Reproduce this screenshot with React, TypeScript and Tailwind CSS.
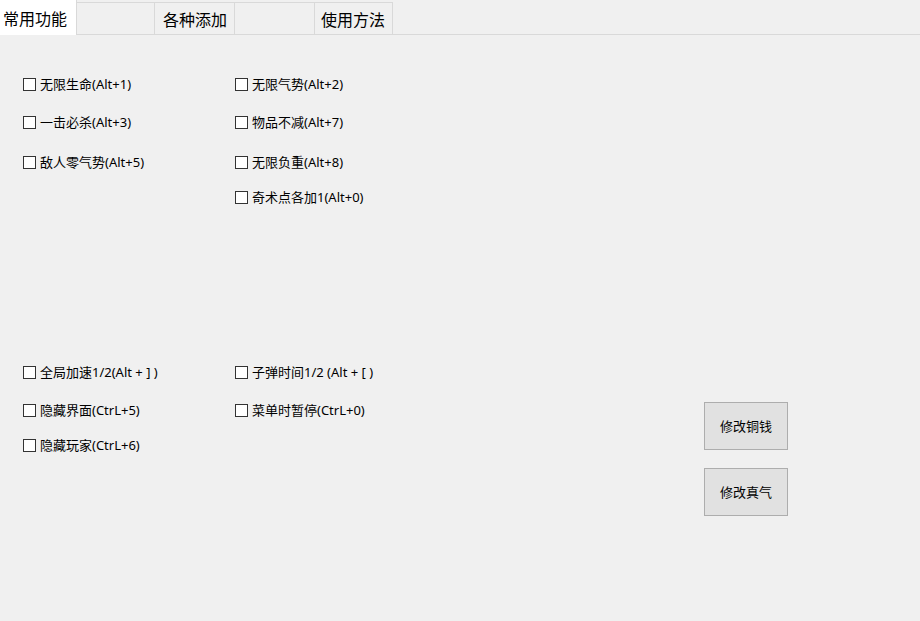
import React from "react";

const font = "font-['Microsoft_YaHei','Noto_Sans_CJK_SC',sans-serif]";
const labelFont = "font-['Segoe_UI','Noto_Sans','Noto_Sans_CJK_SC',sans-serif]";

const tabs = ["常用功能", "", "各种添加", "", "使用方法"];
const tabWidths = ["w-[77px]", "w-[78px]", "w-[80px]", "w-[80px]", "w-[78px]"];

const CheckItem: React.FC<{ label: string; className?: string }> = ({ label, className }) => (
  <label className={`flex h-[20px] items-center gap-[4px] text-[13px] text-black ${labelFont} ${className ?? ""}`}>
    <span className="h-[13px] w-[13px] shrink-0 border border-[#333333] bg-white" />
    <span className="whitespace-pre leading-none">{label}</span>
  </label>
);

const App: React.FC = () => {
  return (
    <div className={`h-[621px] w-[920px] overflow-hidden bg-[#f0f0f0] ${font}`}>
      {/* tab strip */}
      <div className="flex h-[35px] items-end border-b border-[#d9d9d9]">
        {tabs.map((tab, i) =>
          i === 0 ? (
            <div
              key={i}
              className={`${tabWidths[i]} flex h-[35px] -mb-px items-center border-r border-[#d9d9d9] bg-white pl-[3px] text-[16px] text-black`}
            >
              {tab}
            </div>
          ) : (
            <div
              key={i}
              className={`${tabWidths[i]} flex h-[32px] items-center justify-end border-r border-t border-[#d9d9d9] pr-[7px] text-[16px] text-black`}
            >
              {tab}
            </div>
          )
        )}
      </div>

      <div className="flex pl-[23px]">
        <div className="flex w-[212px] flex-col">
          <CheckItem label="无限生命(Alt+1)" className="mt-[39px]" />
          <CheckItem label="一击必杀(Alt+3)" className="mt-[18px]" />
          <CheckItem label="敌人零气势(Alt+5)" className="mt-[20px]" />
          <CheckItem label="全局加速1/2(Alt + ] )" className="mt-[190px]" />
          <CheckItem label="隐藏界面(CtrL+5)" className="mt-[18px]" />
          <CheckItem label="隐藏玩家(CtrL+6)" className="mt-[15px]" />
        </div>
        <div className="flex w-[469px] flex-col">
          <CheckItem label="无限气势(Alt+2)" className="mt-[39px]" />
          <CheckItem label="物品不减(Alt+7)" className="mt-[18px]" />
          <CheckItem label="无限负重(Alt+8)" className="mt-[20px]" />
          <CheckItem label="奇术点各加1(Alt+0)" className="mt-[15px]" />
          <CheckItem label="子弹时间1/2 (Alt + [ )" className="mt-[155px]" />
          <CheckItem label="菜单时暂停(CtrL+0)" className="mt-[18px]" />
        </div>
        <div className="flex flex-col">
          <button
            type="button"
            className="mt-[367px] h-[48px] w-[84px] border border-[#adadad] bg-[#e1e1e1] text-[13px] text-black"
          >
            修改铜钱
          </button>
          <button
            type="button"
            className="mt-[18px] h-[48px] w-[84px] border border-[#adadad] bg-[#e1e1e1] text-[13px] text-black"
          >
            修改真气
          </button>
        </div>
      </div>
    </div>
  );
};

export default App;
